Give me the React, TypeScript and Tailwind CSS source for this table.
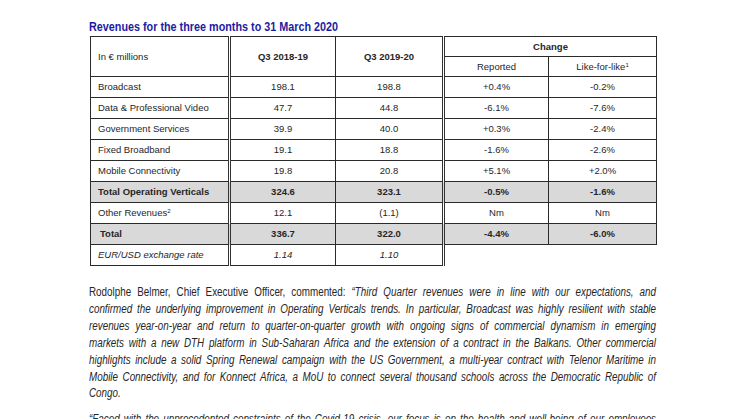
type Row = {
  label: string
  sup?: string
  a: string
  b: string
  r: string
  l: string
  total?: boolean
  indent?: boolean
}

const rows: Row[] = [
  { label: 'Broadcast', a: '198.1', b: '198.8', r: '+0.4%', l: '-0.2%' },
  { label: 'Data & Professional Video', a: '47.7', b: '44.8', r: '-6.1%', l: '-7.6%' },
  { label: 'Government Services', a: '39.9', b: '40.0', r: '+0.3%', l: '-2.4%' },
  { label: 'Fixed Broadband', a: '19.1', b: '18.8', r: '-1.6%', l: '-2.6%' },
  { label: 'Mobile Connectivity', a: '19.8', b: '20.8', r: '+5.1%', l: '+2.0%' },
  { label: 'Total Operating Verticals', a: '324.6', b: '323.1', r: '-0.5%', l: '-1.6%', total: true },
  { label: 'Other Revenues', sup: '2', a: '12.1', b: '(1.1)', r: 'Nm', l: 'Nm' },
  { label: 'Total', a: '336.7', b: '322.0', r: '-4.4%', l: '-6.0%', total: true, indent: true },
]

const lines = [
  'confirmed the underlying improvement in Operating Verticals trends. In particular, Broadcast was highly resilient with stable',
  'revenues year-on-year and return to quarter-on-quarter growth with ongoing signs of commercial dynamism in emerging',
  'markets with a new DTH platform in Sub-Saharan Africa and the extension of a contract in the Balkans. Other commercial',
  'highlights include a solid Spring Renewal campaign with the US Government, a multi-year contract with Telenor Maritime in',
  'Mobile Connectivity, and for Konnect Africa, a MoU to connect several thousand schools across the Democratic Republic of',
]

const cell = 'border border-[#2a2a2a] text-center align-middle'
const dbl = 'border-r-[3px] border-r-[#333] border-double'

export default function App() {
  return (
    <div className="h-[419px] w-[746px] overflow-hidden bg-white font-['Liberation_Sans',Arial,sans-serif] text-[#262626]">
      <div className="pl-[89px] pt-[17px]">
        {/* narrow face is not installed, so the text is squeezed horizontally */}
        <h1 className="origin-left scale-x-[0.8] text-[13.5px] leading-[19px] font-bold text-[#1c1ca3]">
          Revenues for the three months to 31 March 2020
        </h1>

        <table className="ml-px border-collapse text-[9.5px] leading-none">
          <colgroup>
            <col className="w-[139px]" />
            <col className="w-[106px]" />
            <col className="w-[108px]" />
            <col className="w-[105px]" />
            <col className="w-[108px]" />
          </colgroup>
          <thead>
            <tr className="h-[20px]">
              <th rowSpan={2} className={`${cell} ${dbl} pl-[7px] text-left font-normal`}>
                In € millions
              </th>
              <th rowSpan={2} className={`${cell} font-bold`}>
                Q3 2018-19
              </th>
              <th rowSpan={2} className={`${cell} ${dbl} font-bold`}>
                Q3 2019-20
              </th>
              <th colSpan={2} className={`${cell} font-bold`}>
                Change
              </th>
            </tr>
            <tr className="h-[20px]">
              <th className={`${cell} font-normal`}>Reported</th>
              <th className={`${cell} font-normal`}>
                Like-for-like<sup className="text-[6px]">1</sup>
              </th>
            </tr>
          </thead>
          <tbody>
            {rows.map((row) => (
              <tr key={row.label} className={row.total ? 'h-[21px] bg-[#d9d9d9] font-bold' : 'h-[21px]'}>
                <td className={`${cell} ${dbl} text-left ${row.indent ? 'pl-[9px]' : 'pl-[7px]'}`}>
                  {row.label}
                  {row.sup ? <sup className="text-[6px]">{row.sup}</sup> : null}
                </td>
                <td className={cell}>{row.a}</td>
                <td className={`${cell} ${dbl}`}>{row.b}</td>
                <td className={cell}>{row.r}</td>
                <td className={cell}>{row.l}</td>
              </tr>
            ))}
            <tr className="h-[21px] italic">
              <td className={`${cell} ${dbl} pl-[7px] text-left`}>EUR/USD exchange rate</td>
              <td className={cell}>1.14</td>
              <td className={`${cell} ${dbl}`}>1.10</td>
              <td />
              <td />
            </tr>
          </tbody>
        </table>

        <div className="mt-[18px] w-[567px]">
          <div className="w-[691.5px] origin-left scale-x-[0.82] text-[12px] leading-[16.9px]">
            <p className="text-justify [text-align-last:justify]">
              Rodolphe Belmer, Chief Executive Officer, commented:{' '}
              <i>“Third Quarter revenues were in line with our expectations, and</i>
            </p>
            {lines.map((line) => (
              <p key={line} className="text-justify italic [text-align-last:justify]">
                {line}
              </p>
            ))}
            <p className="italic">Congo.</p>
            <p className="mt-[9px] text-justify italic [text-align-last:justify]">
              “Faced with the unprecedented constraints of the Covid-19 crisis, our focus is on the health and well-being of our employees
            </p>
          </div>
        </div>
      </div>
    </div>
  )
}
